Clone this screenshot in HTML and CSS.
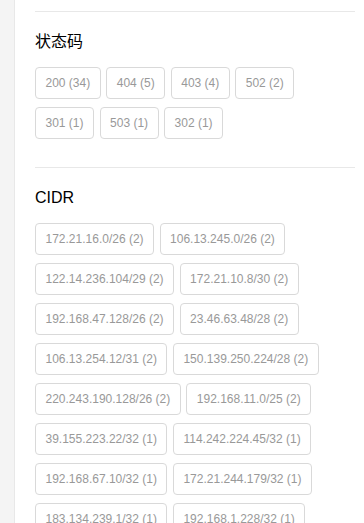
FILE: index.html
```html
<!DOCTYPE html>
<html lang="zh-CN">
<head>
    <meta charset="UTF-8">
    <meta name="viewport" content="width=device-width, initial-scale=1.0">
    <title>统计</title>
    <link rel="stylesheet" href="styles.css">
</head>
<body>
    <div class="layout">
        <div class="sidebar"></div>
        <div class="main">
            <div class="section">
                <h3 class="section-title">状态码</h3>
                <div class="tags">
                    <span class="tag">200 (34)</span>
                    <span class="tag">404 (5)</span>
                    <span class="tag">403 (4)</span>
                    <span class="tag">502 (2)</span>
                    <span class="tag">301 (1)</span>
                    <span class="tag">503 (1)</span>
                    <span class="tag">302 (1)</span>
                </div>
            </div>
            <div class="section">
                <h3 class="section-title">CIDR</h3>
                <div class="tags">
                    <span class="tag">172.21.16.0/26 (2)</span>
                    <span class="tag">106.13.245.0/26 (2)</span>
                    <span class="tag">122.14.236.104/29 (2)</span>
                    <span class="tag">172.21.10.8/30 (2)</span>
                    <span class="tag">192.168.47.128/26 (2)</span>
                    <span class="tag">23.46.63.48/28 (2)</span>
                    <span class="tag">106.13.254.12/31 (2)</span>
                    <span class="tag">150.139.250.224/28 (2)</span>
                    <span class="tag">220.243.190.128/26 (2)</span>
                    <span class="tag">192.168.11.0/25 (2)</span>
                    <span class="tag">39.155.223.22/32 (1)</span>
                    <span class="tag">114.242.224.45/32 (1)</span>
                    <span class="tag">192.168.67.10/32 (1)</span>
                    <span class="tag">172.21.244.179/32 (1)</span>
                    <span class="tag">183.134.239.1/32 (1)</span>
                    <span class="tag">192.168.1.228/32 (1)</span>
                </div>
            </div>
        </div>
    </div>
</body>
</html>
```
FILE: styles.css
```css
body {
    margin: 0;
    padding: 0;
    font-family: 'Liberation Sans', Arial, 'Noto Sans CJK SC', sans-serif;
    background: #fff;
    color: #000;
    overflow: hidden;
}
.layout {
    display: flex;
    min-height: 100vh;
}
.sidebar {
    width: 14px;
    flex-shrink: 0;
    background: #f4f4f4;
    border-right: 1px solid #e8e8e8;
}
.main {
    flex: 1;
    padding: 11px 9px 0 20px;
}
.section {
    border-top: 1px solid #e8e8e8;
    padding: 18px 0 28px;
}
.section-title {
    margin: 0 0 13px;
    font-size: 16px;
    line-height: 24px;
    font-weight: normal;
}
.tags {
    display: flex;
    flex-wrap: wrap;
    gap: 8px 5.5px;
}
.tag {
    display: inline-block;
    height: 32px;
    line-height: 30px;
    padding: 0 9.5px;
    box-sizing: border-box;
    font-size: 12px;
    color: #999;
    border: 1px solid #d9d9d9;
    border-radius: 4px;
    background: #fff;
    white-space: nowrap;
}
```
